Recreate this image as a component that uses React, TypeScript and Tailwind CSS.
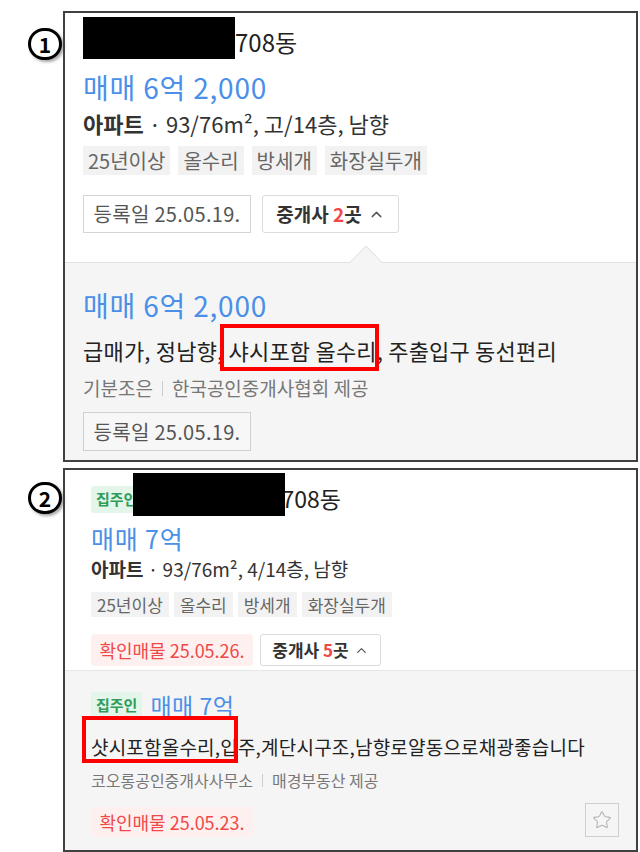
import { Star, ChevronUp } from "lucide-react";

const font = "font-['Noto_Sans_CJK_KR','Noto_Sans',sans-serif]";

function Circle({ n }: { n: string }) {
  return (
    <div className="w-[34px] h-[32px] rounded-full border-[3px] border-black bg-white flex items-center justify-center shadow-[2px_2px_3px_rgba(0,0,0,0.35)]">
      <span className="text-[21px] font-bold leading-none text-black">{n}</span>
    </div>
  );
}

function Tag({ children, cls }: { children: React.ReactNode; cls: string }) {
  return <div className={`flex items-center bg-[#f2f2f2] text-[#666] ${cls}`}>{children}</div>;
}

export default function App() {
  return (
    <div className={`w-[640px] h-[852px] bg-white pt-[11px] ${font} text-[#222] overflow-hidden`}>
      {/* Panel 1 */}
      <div className="flex">
        <div className="w-[63px] shrink-0 pl-[28px] pt-[17px]">
          <Circle n="1" />
        </div>
        <div className="w-[575px] h-[451px] border-2 border-[#404040] flex flex-col">
          <div className="h-[249px] pl-[18px] flex flex-col">
            <div className="mt-[4px] h-[42px] flex items-end">
              <div className="w-[152px] h-[42px] bg-black" />
              <span className="text-[24px] leading-[30px] mb-[2px] text-[#222]">708동</span>
            </div>
            <div className="mt-[13px] text-[28px] leading-[30px] tracking-[0.8px] text-[#4a8fe8]">매매 6억 2,000</div>
            <div className="mt-[8px] text-[22px] leading-[26px] text-[#333]">
              <span className="font-bold">아파트</span> · 93/76m², 고/14층, 남향
            </div>
            <div className="mt-[10px] flex gap-[8px]">
              <Tag cls="h-[29px] px-[5px] text-[20px]">25년이상</Tag>
              <Tag cls="h-[29px] px-[5px] text-[20px]">올수리</Tag>
              <Tag cls="h-[29px] px-[5px] text-[20px]">방세개</Tag>
              <Tag cls="h-[29px] px-[5px] text-[20px]">화장실두개</Tag>
            </div>
            <div className="mt-[20px] flex gap-[11px]">
              <div className="h-[38px] w-[168px] flex items-center justify-center border border-[#d5d5d5] bg-white text-[20px] tracking-[0.3px] text-[#555]">
                등록일 25.05.19.
              </div>
              <div className="h-[38px] w-[137px] flex items-center justify-center gap-[6px] border border-[#dcdcdc] rounded-[3px] bg-white text-[19px] font-bold text-[#333]">
                <span>
                  중개사 <span className="text-[#f04848]">2</span>곳
                </span>
                <ChevronUp size={17} strokeWidth={2} className="text-[#555]" />
              </div>
            </div>
          </div>
          <div className="relative flex-1 bg-[#f5f5f5] border-t border-[#e0e0e0] pl-[18px] flex flex-col">
            <svg className="absolute left-[285px] top-[-18px]" width="32" height="18" viewBox="0 0 32 18">
              <path d="M0 18 L16 1 L32 18 Z" fill="#f5f5f5" />
              <path d="M0 17.5 L16 1 L32 17.5" fill="none" stroke="#dcdcdc" strokeWidth="1" />
            </svg>
            <div className="mt-[27px] text-[28px] leading-[30px] tracking-[0.8px] text-[#4a8fe8]">매매 6억 2,000</div>
            <div className="mt-[16px] text-[22px] leading-[28px] tracking-[0.2px] text-[#222]">
              급매가, 정남향,{" "}
              <span className="relative">
                샤시포함 올수리
                <span className="absolute left-[-9px] right-[-2px] top-[-10px] bottom-[-5px] border-[4px] border-[#ff0000]" />
              </span>
              , 주출입구 동선편리
            </div>
            <div className="mt-[12px] text-[19px] leading-[24px] text-[#777] flex items-center">
              기분조은
              <span className="mx-[9px] w-px h-[15px] bg-[#ccc]" />
              한국공인중개사협회 제공
            </div>
            <div className="mt-[12px] h-[39px] w-[168px] flex items-center justify-center border border-[#d0d0d0] bg-[#f7f7f7] text-[20px] tracking-[0.3px] text-[#555]">
              등록일 25.05.19.
            </div>
          </div>
        </div>
      </div>

      {/* Panel 2 */}
      <div className="flex mt-[6px]">
        <div className="w-[63px] shrink-0 pl-[28px] pt-[14px]">
          <Circle n="2" />
        </div>
        <div className="w-[575px] h-[384px] border-2 border-[#404040] flex flex-col">
          <div className="h-[200px] pl-[26px] flex flex-col">
            <div className="relative mt-[3px] h-[43px] flex items-center">
              <div className="h-[27px] px-[5px] mt-[10px] flex items-center rounded-[3px] bg-[#e4f5ea] text-[#2f9d5a] text-[15px] font-bold">
                집주인
              </div>
              <div className="absolute left-[42px] top-0 w-[152px] h-[43px] bg-black" />
              <span className="ml-[139px] mt-[6px] text-[23px] leading-[28px] text-[#222]">708동</span>
            </div>
            <div className="mt-[8px] text-[25px] leading-[28px] tracking-[0.8px] text-[#4a8fe8]">매매 7억</div>
            <div className="mt-[6px] text-[19px] leading-[22px] text-[#333]">
              <span className="font-bold">아파트</span> · 93/76m², 4/14층, 남향
            </div>
            <div className="mt-[12px] flex gap-[5px]">
              <Tag cls="h-[25px] px-[6px] text-[17px]">25년이상</Tag>
              <Tag cls="h-[25px] px-[6px] text-[17px]">올수리</Tag>
              <Tag cls="h-[25px] px-[6px] text-[17px]">방세개</Tag>
              <Tag cls="h-[25px] px-[6px] text-[17px]">화장실두개</Tag>
            </div>
            <div className="mt-[17px] flex gap-[7px]">
              <div className="h-[32px] w-[162px] flex items-center justify-center rounded-[4px] bg-[#fff0f0] text-[18px] text-[#f04848]">
                확인매물 25.05.26.
              </div>
              <div className="h-[32px] w-[121px] flex items-center justify-center gap-[5px] border border-[#dcdcdc] rounded-[3px] bg-white text-[17px] font-bold text-[#333]">
                <span>
                  중개사 <span className="text-[#f04848]">5</span>곳
                </span>
                <ChevronUp size={15} strokeWidth={2} className="text-[#555]" />
              </div>
            </div>
          </div>
          <div className="flex-1 bg-[#f5f5f5] border-t border-[#e6e6e6] pl-[26px] pr-[17px] flex flex-col">
            <div className="mt-[20px] h-[28px] flex items-center gap-[8px]">
              <div className="h-[26px] px-[5px] flex items-center rounded-[3px] bg-[#e4f5ea] text-[#2f9d5a] text-[15px] font-bold">
                집주인
              </div>
              <span className="text-[23px] leading-[28px] tracking-[0.5px] text-[#4a8fe8]">매매 7억</span>
            </div>
            <div className="mt-[16px] text-[19px] leading-[24px] tracking-[0.2px] text-[#222]">
              <span className="relative">
                샷시포함올수리,입
                <span className="absolute left-[-9px] right-[0px] top-[-17px] bottom-[-3px] border-[4px] border-[#ff0000]" />
              </span>
              주,계단시구조,남향로얄동으로채광좋습니다
            </div>
            <div className="mt-[11px] text-[16px] leading-[20px] text-[#777] flex items-center">
              코오롱공인중개사사무소
              <span className="mx-[9px] w-px h-[13px] bg-[#ccc]" />
              매경부동산 제공
            </div>
            <div className="mt-[13px] h-[34px] flex items-end justify-between">
              <div className="h-[30px] w-[162px] flex items-center justify-center rounded-[4px] bg-[#fff0f0] text-[18px] text-[#f04848]">
                확인매물 25.05.23.
              </div>
              <div className="w-[34px] h-[34px] border border-[#cfcfcf] flex items-center justify-center">
                <Star size={20} strokeWidth={1.3} className="text-[#b5b5b5]" />
              </div>
            </div>
          </div>
        </div>
      </div>
    </div>
  );
}
